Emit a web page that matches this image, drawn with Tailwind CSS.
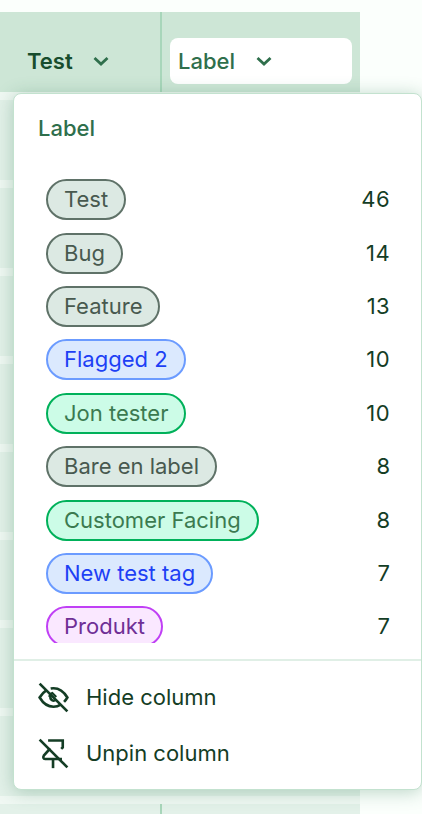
<!DOCTYPE html>
<html>
<head>
<script src="https://cdn.jsdelivr.net/npm/@tailwindcss/browser@4"></script>
</head>
<body class="bg-[#fbfffc] font-['Inter','Liberation_Sans',sans-serif]">
<div class="relative w-[422px] h-[814px] overflow-hidden pt-3">
  <div class="flex w-[360px] h-20 bg-[#cde6d6] pt-[18px]">
    <div class="w-[160px] h-[62px] flex items-center pl-[27px] gap-[18px] text-[22px] font-semibold text-[#174d2d]">
      <span>Test</span>
      <svg class="w-[20px] h-[20px] text-[#2f6f4c]" viewBox="0 0 20 20" fill="none" stroke="currentColor" stroke-width="2.8"><path d="M3.5 7l6.5 6 6.5-6"/></svg>
    </div>
    <div class="w-[2px] h-[80px] -mt-[18px] bg-[#a8d6ba]"></div>
    <div class="flex-1 pl-2 pr-2 pt-2">
      <div class="w-[182px] h-[46px] bg-white rounded-lg flex items-center pl-2 gap-[19px] text-[22px] font-medium text-[#2f6f4c]">
        <span>Label</span>
        <svg class="w-[20px] h-[20px]" viewBox="0 0 20 20" fill="none" stroke="currentColor" stroke-width="2.8"><path d="M3.5 7l6.5 6 6.5-6"/></svg>
      </div>
    </div>
  </div>
  <div class="w-[360px] flex flex-col">
    <div class="h-2 bg-[#f0f8f3]"></div><div class="h-20 bg-[#e3f1e9]"></div>
    <div class="h-2 bg-[#f0f8f3]"></div><div class="h-20 bg-[#e3f1e9]"></div>
    <div class="h-2 bg-[#f0f8f3]"></div><div class="h-20 bg-[#e3f1e9]"></div>
    <div class="h-2 bg-[#f0f8f3]"></div><div class="h-20 bg-[#e3f1e9]"></div>
    <div class="h-2 bg-[#f0f8f3]"></div><div class="h-20 bg-[#e3f1e9]"></div>
    <div class="h-2 bg-[#f0f8f3]"></div><div class="h-20 bg-[#e3f1e9]"></div>
    <div class="h-2 bg-[#f0f8f3]"></div><div class="h-20 bg-[#e3f1e9]"></div>
    <div class="h-2 bg-[#f0f8f3]"></div><div class="h-20 bg-[#e3f1e9]"></div>
    <div class="h-2 bg-[#f0f8f3]"></div><div class="h-20 bg-[#e3f1e9] relative"><div class="absolute left-[160px] top-0 w-[2px] h-full bg-[#a8d6ba]"></div></div>
  </div>
  <div class="absolute left-[13px] top-[93px] w-[409px] h-[697px] bg-white border border-[#c3e2cf] rounded-lg shadow-[0_2px_18px_rgba(50,120,85,0.32)] flex flex-col">
    <div class="h-[69px] pl-[24px] pt-[20px] text-[22px] leading-[28px] font-medium text-[#2f6f4c]">Label</div>
    <div class="h-[480px] overflow-hidden pl-[32px] pr-[31px] pt-[16.3px] flex flex-col gap-[12.4px] text-[22px]">
      <div class="flex justify-between items-center shrink-0"><span class="h-[41px] flex items-center px-[16px] rounded-full border-2 border-[#5f7268] bg-[#dce9e3] text-[#48594f]">Test</span><span class="text-[#143d25] tracking-[0.4px]">46</span></div>
      <div class="flex justify-between items-center shrink-0"><span class="h-[41px] flex items-center px-[16px] rounded-full border-2 border-[#5f7268] bg-[#dce9e3] text-[#48594f]">Bug</span><span class="text-[#143d25] tracking-[0.4px]">14</span></div>
      <div class="flex justify-between items-center shrink-0"><span class="h-[41px] flex items-center px-[16px] rounded-full border-2 border-[#5f7268] bg-[#dce9e3] text-[#48594f]">Feature</span><span class="text-[#143d25] tracking-[0.4px]">13</span></div>
      <div class="flex justify-between items-center shrink-0"><span class="h-[41px] flex items-center px-[16px] rounded-full border-2 border-[#6b9bff] bg-[#dbe9fe] text-[#1d40f5]">Flagged 2</span><span class="text-[#143d25] tracking-[0.4px]">10</span></div>
      <div class="flex justify-between items-center shrink-0"><span class="h-[41px] flex items-center px-[16px] rounded-full border-2 border-[#00b15a] bg-[#ccfce7] text-[#3b7a50]">Jon tester</span><span class="text-[#143d25] tracking-[0.4px]">10</span></div>
      <div class="flex justify-between items-center shrink-0"><span class="h-[41px] flex items-center px-[16px] rounded-full border-2 border-[#5f7268] bg-[#dce9e3] text-[#48594f]">Bare en label</span><span class="text-[#143d25]">8</span></div>
      <div class="flex justify-between items-center shrink-0"><span class="h-[41px] flex items-center px-[16px] rounded-full border-2 border-[#00b15a] bg-[#ccfce7] text-[#3b7a50]">Customer Facing</span><span class="text-[#143d25]">8</span></div>
      <div class="flex justify-between items-center shrink-0"><span class="h-[41px] flex items-center px-[16px] rounded-full border-2 border-[#6b9bff] bg-[#dbe9fe] text-[#1d40f5]">New test tag</span><span class="text-[#143d25]">7</span></div>
      <div class="flex justify-between items-center shrink-0"><span class="h-[41px] flex items-center px-[16px] rounded-full border-2 border-[#c040f5] bg-[#fae8ff] text-[#6f2f96]">Produkt</span><span class="text-[#143d25]">7</span></div>
    </div>
    <div class="mt-[16px] border-t-2 border-[#e0efe6] pt-[8px] flex flex-col text-[22px] text-[#143d25]">
      <div class="h-[56px] flex items-center pl-[21px] gap-[14px]">
        <svg class="w-[37px] h-[37px]" viewBox="0 0 24 24" fill="none" stroke="currentColor" stroke-width="1.7"><path d="M10.585 10.587a2 2 0 0 0 2.829 2.828"/><path d="M16.681 16.673a8.717 8.717 0 0 1 -4.681 1.327c-3.6 0 -6.6 -2 -9 -6c1.272 -2.12 2.712 -3.678 4.32 -4.674m2.86 -1.146a9.055 9.055 0 0 1 1.82 -.18c3.6 0 6.6 2 9 6c-.666 1.11 -1.379 2.067 -2.138 2.87"/><path d="M3 3l18 18"/><path d="M9.3 11.6a2.8 2.8 0 0 1 1.9 -2.5l2.6 2.6" stroke-width="1.4"/></svg>
        <span>Hide column</span>
      </div>
      <div class="h-[56px] flex items-center pl-[21px] gap-[14px]">
        <svg class="w-[37px] h-[37px]" viewBox="0 0 24 24" fill="none" stroke="currentColor" stroke-width="1.7"><path d="M3 3l18 18"/><path d="M8.5 3.6h9.5v4.4l-1 1"/><path d="M9.5 8.5l-.8 1.5l-3 3.4c-.6 .9 -.3 2.2 .8 2.2h11"/><path d="M11.7 15.7v5.8"/></svg>
        <span>Unpin column</span>
      </div>
    </div>
  </div>
</div>
</body>
</html>
